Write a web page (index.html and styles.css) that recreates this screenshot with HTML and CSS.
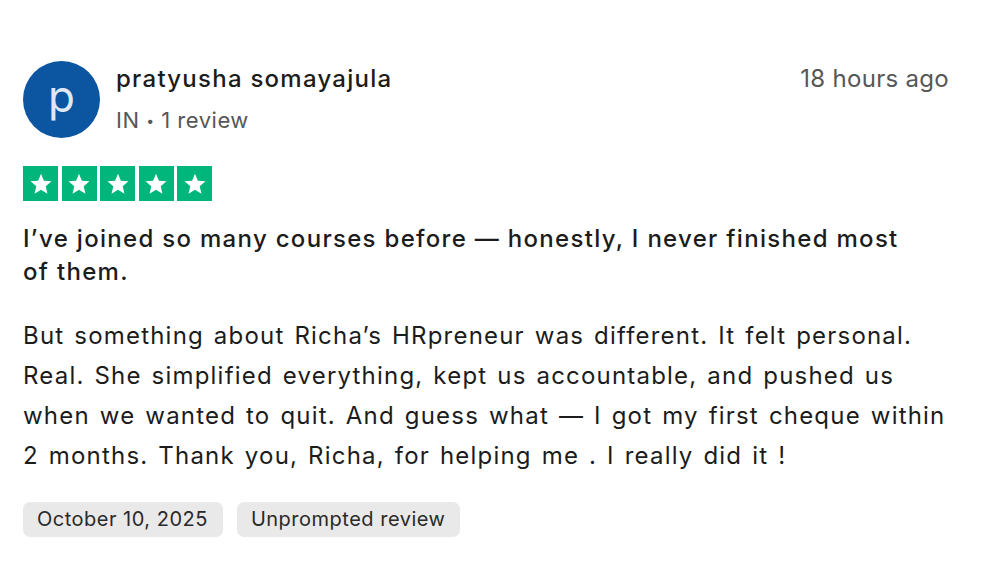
FILE: index.html
```html
<!DOCTYPE html>
<html lang="en">
<head>
<meta charset="utf-8">
<title>Review</title>
<link rel="stylesheet" href="styles.css">
</head>
<body>
<article class="review">
  <header class="review-header">
    <div class="avatar">p</div>
    <div class="consumer">
      <div class="name">pratyusha somayajula</div>
      <div class="meta">IN <span class="dot">•</span> 1 review</div>
    </div>
    <time class="time">18 hours ago</time>
  </header>
  <div class="stars" aria-label="Rated 5 out of 5">
    <span class="star"><svg viewBox="0 0 24 24"><path d="M12 3.2l2.47 6.03 6.5.5-4.95 4.22 1.52 6.34L12 16.86 6.46 20.29l1.520-6.34L3.03 9.73l6.5-.5z"/></svg></span>
    <span class="star"><svg viewBox="0 0 24 24"><path d="M12 3.2l2.47 6.03 6.5.5-4.95 4.22 1.52 6.34L12 16.86 6.46 20.29l1.52-6.34L3.03 9.73l6.5-.5z"/></svg></span>
    <span class="star"><svg viewBox="0 0 24 24"><path d="M12 3.2l2.47 6.03 6.5.5-4.95 4.22 1.52 6.34L12 16.86 6.46 20.29l1.52-6.34L3.03 9.73l6.5-.5z"/></svg></span>
    <span class="star"><svg viewBox="0 0 24 24"><path d="M12 3.2l2.47 6.03 6.5.5-4.95 4.22 1.52 6.34L12 16.86 6.46 20.29l1.52-6.34L3.03 9.73l6.5-.5z"/></svg></span>
    <span class="star"><svg viewBox="0 0 24 24"><path d="M12 3.2l2.47 6.03 6.5.5-4.95 4.22 1.52 6.34L12 16.86 6.46 20.29l1.52-6.34L3.03 9.73l6.5-.5z"/></svg></span>
  </div>
  <h2 class="title">I’ve joined so many courses before — honestly, I never finished most of them.</h2>
  <p class="body">But something about Richa’s HRpreneur was different. It felt personal. Real. She simplified everything, kept us accountable, and pushed us when we wanted to quit. And guess what — I got my first cheque within 2 months. Thank you, Richa, for helping me . I really did it !</p>
  <div class="tags">
    <span class="tag">October 10, 2025</span>
    <span class="tag">Unprompted review</span>
  </div>
</article>
</body>
</html>
```
FILE: styles.css
```css
html, body {
  margin: 0;
  padding: 0;
  background: #ffffff;
}

body {
  font-family: Inter, "Noto Sans", "Liberation Sans", sans-serif;
  color: #1c1c1c;
}

.review {
  width: 926px;
  padding: 61px 0 0 23px;
}

.review-header {
  display: flex;
  align-items: flex-start;
}

.avatar {
  width: 77px;
  height: 77px;
  border-radius: 50%;
  background: #0b55a1;
  color: #dfe8f3;
  font-size: 44px;
  line-height: 70px;
  text-align: center;
  flex: none;
}

.consumer {
  flex: 1;
  padding: 4px 0 0 16px;
  display: flex;
  flex-direction: column;
  gap: 13px;
}

.name {
  font-size: 24px;
  font-weight: 500;
  line-height: 28px;
  letter-spacing: 1.25px;
  color: #1c1c1c;
}

.meta {
  font-size: 22px;
  line-height: 28px;
  letter-spacing: 0.5px;
  color: #575757;
}

.dot {
  font-size: 14px;
  vertical-align: 2px;
}

.time {
  padding-top: 4px;
  font-size: 24px;
  line-height: 28px;
  letter-spacing: 0.3px;
  color: #575757;
}

.stars {
  display: flex;
  gap: 3.5px;
  margin-top: 28px;
}

.star {
  width: 35px;
  height: 35px;
  background: #00b67a;
  display: flex;
  align-items: center;
  justify-content: center;
}

.star svg {
  width: 28px;
  height: 28px;
  fill: #ffffff;
}

.title {
  margin: 21px 0 0;
  max-width: 900px;
  font-size: 24px;
  font-weight: 500;
  line-height: 33px;
  letter-spacing: 1.3px;
  color: #1c1c1c;
}

.body {
  margin: 28px 0 0;
  font-size: 24px;
  line-height: 40px;
  letter-spacing: 1.2px;
  word-spacing: 2px;
  color: #1c1c1c;
}

.tags {
  display: flex;
  gap: 14px;
  margin-top: 26px;
}

.tag {
  height: 35px;
  line-height: 35px;
  padding: 0 15px 0 14px;
  background: #e9e9e9;
  border-radius: 7px;
  font-size: 20px;
  letter-spacing: 0.5px;
  color: #2a2a2a;
}
```
